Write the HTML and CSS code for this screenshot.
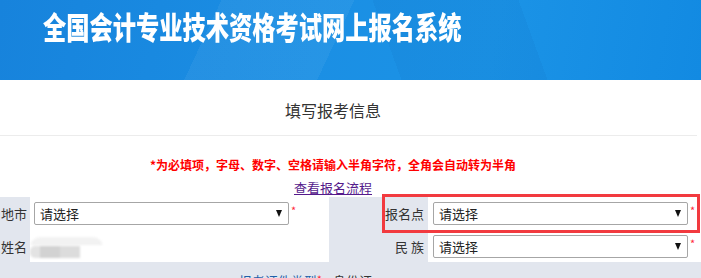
FILE: index.html
```html
<!DOCTYPE html>
<html lang="zh-CN">
<head>
<meta charset="utf-8">
<title>全国会计专业技术资格考试网上报名系统</title>
<link rel="stylesheet" href="styles.css">
</head>
<body>
<header class="banner">
  <h1 class="banner-title">全国会计专业技术资格考试网上报名系统</h1>
</header>
<main class="page">
  <h2 class="section-title">填写报考信息</h2>
  <p class="note">*为必填项，字母、数字、空格请输入半角字符，全角会自动转为半角</p>
  <p class="flow"><a href="#" class="flow-link">查看报名流程</a></p>
  <div class="form">
    <div class="lbl lbl-left">地市</div>
    <div class="val">
      <div class="sel"><span>请选择</span><i class="arrow"></i></div><span class="req">*</span>
    </div>
    <div class="lbl lbl-right">报名点</div>
    <div class="val val-right">
      <div class="sel"><span>请选择</span><i class="arrow"></i></div><span class="req">*</span>
    </div>

    <div class="lbl lbl-left">姓名</div>
    <div class="val">
      <div class="blur-name"><span class="b1"></span><span class="b2"></span><span class="b3"></span><span class="b4"></span></div>
    </div>
    <div class="lbl lbl-right">民 族</div>
    <div class="val val-right">
      <div class="sel"><span>请选择</span><i class="arrow"></i></div><span class="req">*</span>
    </div>

    <div class="lbl lbl-wide">报考证件类型<span class="req2">*</span></div>
    <div class="plain">身份证</div>

    <div class="highlight"></div>
  </div>
</main>
</body>
</html>
```
FILE: styles.css
```css
html, body {
  margin: 0;
  padding: 0;
  background: #ffffff;
  font-family: "Noto Sans CJK SC", "Noto Sans", "Liberation Sans", sans-serif;
  color: #333;
  overflow: hidden;
}

.banner {
  height: 80px;
  box-sizing: border-box;
  padding: 10px 0 0 43px;
  background:
    linear-gradient(115deg, rgba(255,255,255,0) 0%, rgba(255,255,255,0) 30%, rgba(255,255,255,0.05) 30%, rgba(255,255,255,0.05) 48%, rgba(255,255,255,0) 48%),
    linear-gradient(70deg, rgba(0,60,140,0) 55%, rgba(0,60,140,0.06) 55%, rgba(0,60,140,0.06) 75%, rgba(0,60,140,0) 75%),
    linear-gradient(100deg, #1783dc 0%, #1b8fe4 45%, #1b93e6 70%, #128ae2 100%);
}

.banner-title {
  margin: 0;
  font-size: 31px;
  line-height: 31px;
  font-weight: 900;
  color: #ffffff;
  white-space: nowrap;
  transform: scaleX(0.75);
  transform-origin: left center;
  letter-spacing: 0;
}

.page {
  width: 701px;
}

.section-title {
  width: 697px;
  margin: 0;
  box-sizing: border-box;
  padding: 22px 31px 0 0;
  height: 56px;
  font-size: 16px;
  line-height: 16px;
  font-weight: 400;
  color: #333;
  text-align: center;
  border-bottom: 1px solid #ececec;
}

.note {
  width: 666px;
  margin: 21px 0 0;
  font-size: 12px;
  line-height: 16px;
  font-weight: 700;
  color: #ff0000;
  text-align: center;
}

.flow {
  width: 666px;
  margin: 6px 0 0;
  font-size: 13px;
  line-height: 17px;
  text-align: center;
}

.flow-link {
  color: #551a8b;
  text-decoration: underline;
}

.form {
  position: relative;
  margin-top: 1px;
  display: grid;
  grid-template-columns: 30px 299px 99px 273px;
  grid-template-rows: 33px 32px 20px;
  background: #e2e6ee;
  font-size: 13px;
}

.lbl {
  display: flex;
  align-items: center;
  justify-content: flex-end;
  color: #333;
  white-space: nowrap;
}

.lbl-left {
  padding-right: 3px;
}

.lbl-right {
  padding-right: 4px;
}

.val {
  background: #ffffff;
  display: flex;
  align-items: center;
  padding-left: 4px;
}

.val-right {
  padding-left: 5px;
}

.sel {
  width: 255px;
  height: 23px;
  box-sizing: border-box;
  border: 1px solid #a6a6a6;
  border-radius: 2px;
  background: #ffffff;
  display: flex;
  align-items: center;
  padding: 0 4px 0 5px;
  font-size: 13px;
  color: #222;
}

.arrow {
  margin-left: auto;
  width: 0;
  height: 0;
  border-left: 3.5px solid transparent;
  border-right: 3.5px solid transparent;
  border-top: 7px solid #111;
  margin-right: 2px;
}

.req {
  color: #ff2a3c;
  font-size: 11px;
  margin-left: 2px;
  align-self: flex-start;
  margin-top: 8px;
  line-height: 11px;
}

.blur-name {
  display: flex;
  align-items: flex-end;
  width: 73px;
  height: 21px;
  margin-left: -4px;
  margin-top: 2px;
  border-radius: 10px;
  background: linear-gradient(#f3f3f3 0%, #f1f1f1 40%, rgba(255,255,255,0) 40%);
  filter: blur(1px);
}

.blur-name span {
  height: 12px;
  display: block;
}

.b1 { width: 10px; background: #e3e3e3; border-radius: 5px 0 0 5px; }
.b2 { width: 20px; background: #d2d2d2; }
.b3 { width: 20px; background: #dcdcdc; }
.b4 { width: 0; }

.lbl-wide {
  grid-column: 1 / 3;
  align-items: flex-start;
  padding: 9px 7px 0 0;
  color: #1f5fa8;
}

.req2 {
  color: #ff2a3c;
  font-size: 11px;
}

.plain {
  grid-column: 3 / 5;
  padding: 9px 0 0 4px;
  color: #333;
  white-space: nowrap;
}

.highlight {
  position: absolute;
  left: 382px;
  top: -3px;
  width: 318px;
  height: 39px;
  box-sizing: border-box;
  border: 3px solid #f23a3f;
  pointer-events: none;
}
```
